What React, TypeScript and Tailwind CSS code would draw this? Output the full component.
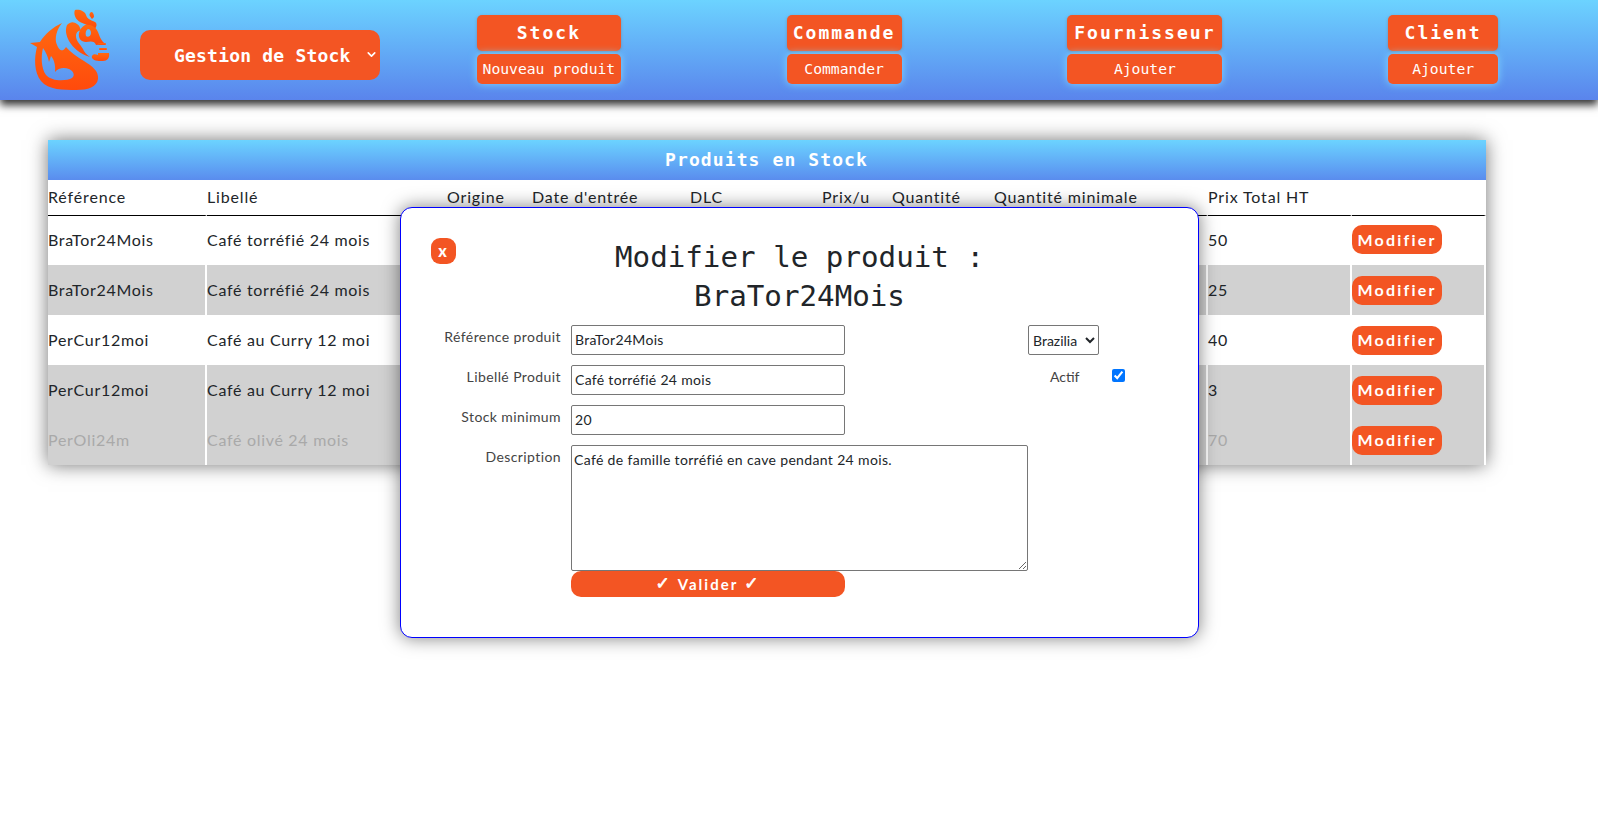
import { ChevronDown } from "lucide-react";

const mono = "font-['DejaVu_Sans_Mono','Liberation_Mono',monospace]";

const menus = [
  { title: "Stock", action: "Nouveau produit", width: "w-[144px]" },
  { title: "Commande", action: "Commander", width: "w-[115px]" },
  { title: "Fournisseur", action: "Ajouter", width: "w-[155px]" },
  { title: "Client", action: "Ajouter", width: "w-[110px]" },
];

const columns = [
  "Référence",
  "Libellé",
  "Origine",
  "Date d'entrée",
  "DLC",
  "Prix/u",
  "Quantité",
  "Quantité minimale",
  "Prix Total HT",
  "",
];

const rows = [
  { ref: "BraTor24Mois", label: "Café torréfié 24 mois", total: "50", bg: "bg-white", text: "text-[#212529]" },
  { ref: "BraTor24Mois", label: "Café torréfié 24 mois", total: "25", bg: "bg-[#d1d1d1]", text: "text-[#212529]" },
  { ref: "PerCur12moi", label: "Café au Curry 12 moi", total: "40", bg: "bg-white", text: "text-[#212529]" },
  { ref: "PerCur12moi", label: "Café au Curry 12 moi", total: "3", bg: "bg-[#d1d1d1]", text: "text-[#212529]" },
  { ref: "PerOli24m", label: "Café olivé 24 mois", total: "70", bg: "bg-[#d1d1d1]", text: "text-[#a9a9a9]" },
];

function Logo() {
  return (
    <svg viewBox="0 0 100 100" className="h-[100px] w-[100px]" aria-label="Logo">
      <defs>
        <linearGradient id="flame" x1="0" y1="0" x2="0" y2="1">
          <stop offset="0" stopColor="#ff6a10" />
          <stop offset="1" stopColor="#ff4a0c" />
        </linearGradient>
      </defs>
      <g fill="url(#flame)">
        {/* tail and back */}
        <path
          fillRule="evenodd"
          d="M42 23C33 27 25 34 20 42L10 43L17 47C14 58 14 72 21 81C28 90 44 90 56 90C68 90 77 87 78 79C79 71 72 66 64 61C56 56 50 52 46 47C42 54 38 49 36 42C35 35 38 28 42 23ZM23 48C21 56 21 68 26 75C32 82 47 81 52 78C55 76 54 71 49 69C44 67 38 68 35 72C36 64 33 58 31 56L29 62C28 57 26 52 23 48Z"
        />
        {/* neck strand */}
        <path d="M47 25C51 21 54 22 57 24C60 26 60 28 61 31C58 30 56 33 56 36C56 41 60 44 63 49C64 52 66 54 70 57C60 54 53 48 49 41C46 35 45 30 47 25Z" />
        {/* horn */}
        <path d="M55 10C59 9 65 11 66 15C67 19 71 20 75 22C78 24 76 28 74 30C71 26 64 24 60 22C56 20 53 14 55 10Z" />
        <path d="M71 12C73 12 74 14 74 17L72 19C70 16 68 15 71 12Z" />
        {/* head with eye */}
        <path fillRule="evenodd" d="M65 25C71 24 76 27 78 32C80 38 82 41 85 44L76 45C75 41 71 41 66 42C61 42 58 38 59 33C60 29 62 27 65 25ZM68 29C66 30 65 33 66 36C68 38 71 36 71 33C71 31 70 29 68 29Z" />
        <rect x="78" y="43" width="8" height="2" rx="1" />
        <rect x="79" y="48" width="8" height="2" rx="1" />
        {/* cup */}
        <path d="M78 53H89C90 58 87 61 83 61H79C74 61 71 58 72 56C73 54 75 54 78 55Z" />
      </g>
    </svg>
  );
}

function MenuGroup({ title, action, width }: { title: string; action: string; width: string }) {
  return (
    <div className={`flex flex-col gap-[3px] ${width}`}>
      <a className={`flex h-[36px] items-center justify-center rounded-[5px] bg-[#f35523] pb-[1px] text-[18px] font-bold tracking-[2px] text-white shadow-[0_1px_3px_rgba(120,120,120,0.6)] ${mono}`}>
        {title}
      </a>
      <a className={`flex h-[30px] items-center justify-center rounded-[5px] bg-[#f35523] pt-[2px] text-[14.7px] text-white shadow-[0_0_8px_#7fd8ff] ${mono}`}>
        {action}
      </a>
    </div>
  );
}

function FormLabel({ children }: { children: string }) {
  return <label className="pr-[10px] pt-[1px] text-right text-[14px] tracking-[0.4px] text-[#444]">{children}</label>;
}

function TextField({ value }: { value: string }) {
  return (
    <input
      defaultValue={value}
      className="h-[30px] w-full rounded-[2px] border border-[#767676] px-[3px] pb-[1px] text-[14px] tracking-[0.3px] text-[#212529]"
    />
  );
}

export default function App() {
  return (
    <div className="min-h-[829px] bg-white font-['Lato','Noto_Sans',sans-serif]">
      <header className="flex h-[100px] items-center bg-gradient-to-b from-[#6cd3ff] to-[#5a84ec] shadow-[0_5px_8px_rgba(0,0,0,0.8)]">
        <div className="flex w-[394px] items-center pl-[20px]">
          <Logo />
          <div className="relative ml-[20px] mt-[10px]">
            <select
              className={`h-[50px] w-[240px] cursor-pointer appearance-none rounded-[10px] bg-[#f35523] pl-[34px] text-[18px] font-bold tracking-[0.2px] text-white ${mono}`}
              defaultValue="stock"
            >
              <option value="stock">Gestion de Stock</option>
            </select>
            <ChevronDown className="absolute right-[2px] top-[18px] h-[13px] w-[13px] text-white" strokeWidth={3} />
          </div>
        </div>
        <nav className="mb-[2px] flex flex-1 items-center justify-around pr-[17px]">
          {menus.map((menu) => (
            <MenuGroup key={menu.title} {...menu} />
          ))}
        </nav>
      </header>

      <main className="ml-[48px] mt-[40px] w-[1438px] shadow-[0_0_18px_rgba(0,0,0,0.55)]">
        <div className={`flex h-[40px] items-center justify-center bg-gradient-to-b from-[#6cd3ff] to-[#5a8cee] pb-[2px] pr-[1px] text-[18px] font-bold tracking-[1.1px] text-white ${mono}`}>
          Produits en Stock
        </div>
        <table className="w-full table-fixed border-separate border-spacing-0 bg-white text-[16px] tracking-[0.7px] text-[#212529]">
          <colgroup>
            <col className="w-[159px]" />
            <col className="w-[240px]" />
            <col className="w-[85px]" />
            <col className="w-[158px]" />
            <col className="w-[132px]" />
            <col className="w-[70px]" />
            <col className="w-[102px]" />
            <col className="w-[214px]" />
            <col className="w-[144px]" />
            <col className="w-[134px]" />
          </colgroup>
          <thead>
            <tr>
              {columns.map((col, i) => (
                <th key={i} className="h-[36px] border-b border-r-2 border-b-black border-r-white pb-[2px] text-left font-normal tracking-[0.85px]">
                  {col}
                </th>
              ))}
            </tr>
          </thead>
          <tbody>
            {rows.map((row, i) => (
              <tr key={i} className={`${row.bg} ${row.text}`}>
                <td className={`border-r-2 border-white ${i === 0 ? "h-[49px] pb-[2px]" : "h-[50px]"}`}>{row.ref}</td>
                <td className={`border-r-2 border-white ${i === 0 ? "pb-[2px]" : ""}`}>{row.label}</td>
                <td colSpan={6} className="border-r-2 border-white" />
                <td className={`border-r-2 border-white ${i === 0 ? "pb-[2px]" : ""}`}>{row.total}</td>
                <td className={`border-r-2 border-white ${i === 0 ? "pb-[2px]" : ""}`}>
                  <button className="h-[29px] w-[90px] rounded-[10px] bg-[#f35523] text-[16px] font-bold tracking-[2.2px] text-white">
                    Modifier
                  </button>
                </td>
              </tr>
            ))}
          </tbody>
        </table>
      </main>

      <div className="absolute left-[400px] top-[207px] h-[431px] w-[799px] rounded-[12px] border border-[#0000ff] bg-white shadow-[0_0_18px_rgba(0,0,0,0.5)]">
        <div className="relative pt-[30px]">
          <button className="absolute left-[30px] top-[30px] h-[26px] w-[25px] rounded-[9px] bg-[#f35523] pr-[2px] text-[16px] font-black text-white">
            x
          </button>
          <h2 className={`mx-auto w-[420px] text-center text-[29.2px] leading-[39px] text-[#212529] ${mono}`}>
            Modifier le produit : BraTor24Mois
          </h2>
        </div>
        <form className="mt-[9px] grid grid-cols-[170px_274px_183px_1fr] gap-y-[10px]">
          <FormLabel>Référence produit</FormLabel>
          <TextField value="BraTor24Mois" />
          <span />
          <div>
            <select defaultValue="Brazilia" className="h-[30px] w-[71px] rounded-[2px] border border-[#767676] bg-white text-[14px] text-[#212529]">
              <option>Brazilia</option>
            </select>
          </div>

          <FormLabel>Libellé Produit</FormLabel>
          <TextField value="Café torréfié 24 mois" />
          <span />
          <div className="flex items-start pl-[22px] pt-[1px] text-[14px] text-[#444]">
            <span className="w-[62px]">Actif</span>
            <input type="checkbox" defaultChecked className="mt-[3px] h-[13px] w-[13px]" />
          </div>

          <FormLabel>Stock minimum</FormLabel>
          <TextField value="20" />
          <span className="col-span-2" />

          <FormLabel>Description</FormLabel>
          <div className="col-span-2">
            <textarea
              defaultValue="Café de famille torréfié en cave pendant 24 mois."
              className="block h-[126px] w-[457px] rounded-[2px] border border-[#767676] px-[2px] py-[3px] text-[14px] tracking-[0.35px] text-[#212529]"
            />
            <button className="flex h-[26px] w-[274px] items-center justify-center gap-[6px] rounded-[10px] bg-[#f35523] text-[15px] font-bold tracking-[2px] text-white">
              <span className="font-['DejaVu_Sans',sans-serif] text-[17px] [-webkit-text-stroke:0.7px_white]">✓</span>
              Valider
              <span className="font-['DejaVu_Sans',sans-serif] text-[17px] [-webkit-text-stroke:0.7px_white]">✓</span>
            </button>
          </div>
        </form>
      </div>
    </div>
  );
}
